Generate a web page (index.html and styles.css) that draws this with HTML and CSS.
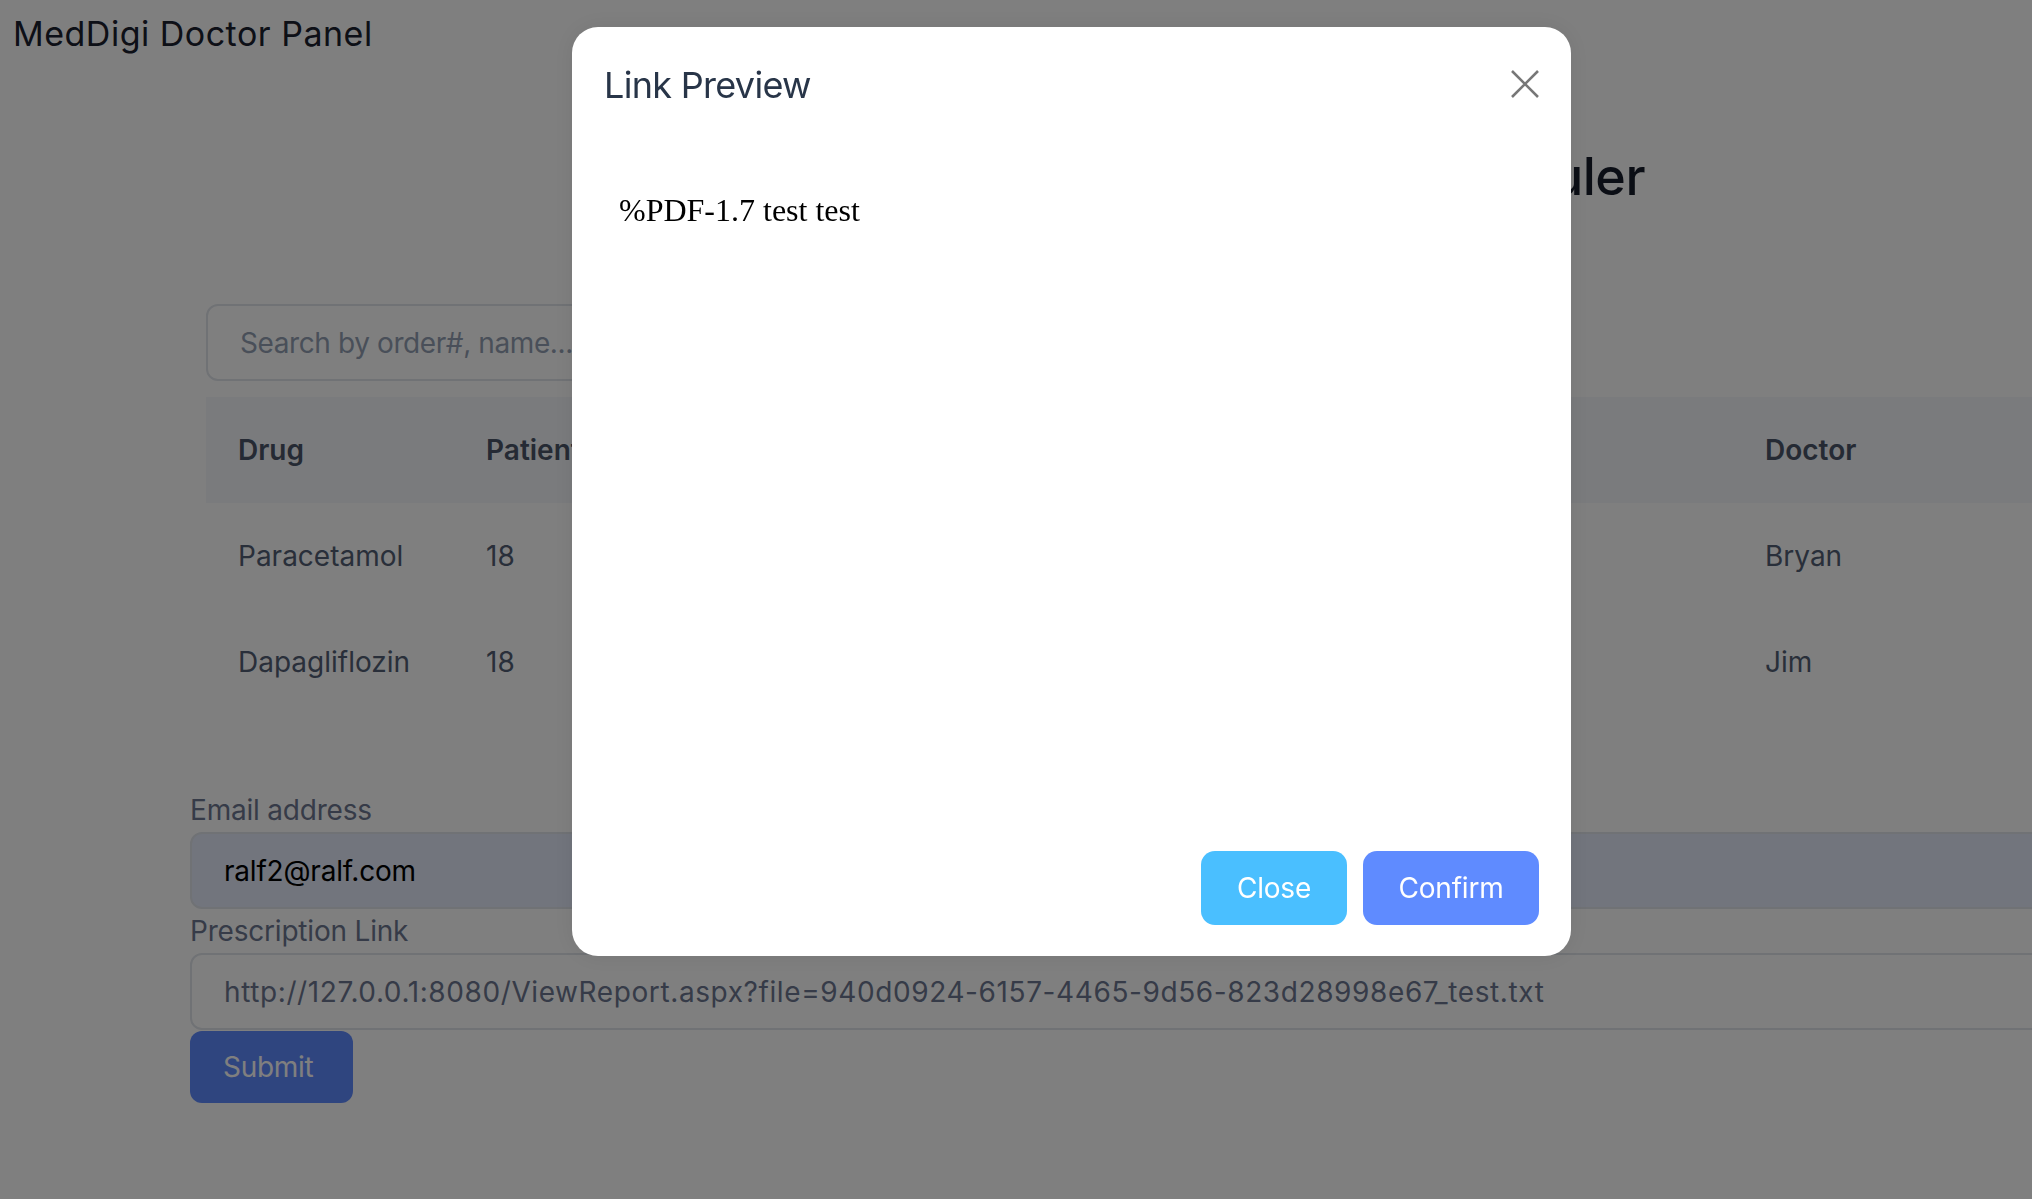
FILE: index.html
```html
<!DOCTYPE html>
<html lang="en">
<head>
<meta charset="utf-8">
<title>MedDigi Doctor Panel</title>
<link rel="stylesheet" href="styles.css">
</head>
<body>
<header class="topbar">MedDigi Doctor Panel</header>
<main class="content">
  <h1 class="page-title">Prescription Scheduler</h1>
  <div class="search">
    <input class="search-input" type="text" placeholder="Search by order#, name...">
  </div>
  <table class="orders">
    <colgroup>
      <col class="c-drug"><col class="c-mid"><col class="c-mid"><col class="c-mid"><col class="c-last"><col class="c-doc">
    </colgroup>
    <thead>
      <tr><th>Drug</th><th>Patient</th><th>Date</th><th>Status</th><th>Link</th><th>Doctor</th></tr>
    </thead>
    <tbody>
      <tr><td>Paracetamol</td><td>18</td><td>2023-10-01</td><td>Sent</td><td>View</td><td>Bryan</td></tr>
      <tr><td>Dapagliflozin</td><td>18</td><td>2023-10-02</td><td>Sent</td><td>View</td><td>Jim</td></tr>
    </tbody>
  </table>
  <form class="rx-form">
    <label class="field-label" for="email">Email address</label>
    <input class="field-input filled" id="email" type="text" value="ralf2@ralf.com">
    <label class="field-label" for="link">Prescription Link</label>
    <input class="field-input link" id="link" type="text" value="http://127.0.0.1:8080/ViewReport.aspx?file=940d0924-6157-4465-9d56-823d28998e67_test.txt">
    <button class="btn-submit" type="button">Submit</button>
  </form>
</main>

<div class="overlay">
  <div class="modal">
    <div class="modal-header">
      <h2 class="modal-title">Link Preview</h2>
      <button class="modal-x" type="button" aria-label="Close">
        <svg width="28" height="28" viewBox="0 0 28 28"><path d="M1 1 L27 27 M27 1 L1 27" stroke="#777" stroke-width="2.6" fill="none"/></svg>
      </button>
    </div>
    <div class="modal-body">
      <div class="preview">%PDF-1.7 test test</div>
    </div>
    <div class="modal-footer">
      <button class="btn btn-close" type="button">Close</button>
      <button class="btn btn-confirm" type="button">Confirm</button>
    </div>
  </div>
</div>
</body>
</html>
```

FILE: styles.css
```css
html, body {
  margin: 0;
  padding: 0;
  overflow: hidden;
  background: #ffffff;
}
body {
  font-family: "Inter", "Liberation Sans", sans-serif;
  color: #1f2533;
  width: 2032px;
  height: 1199px;
}

.topbar {
  padding: 14px 13px 0;
  font-size: 34px;
  line-height: 40px;
  font-weight: 400;
  letter-spacing: 0.5px;
  color: #1a202e;
}

.content {
  padding-left: 190px;
}

.page-title {
  margin: 91px 0 0;
  font-size: 52px;
  line-height: 64px;
  font-weight: 500;
  color: #161c2a;
  text-align: right;
  padding-right: 387px;
  letter-spacing: -0.5px;
}

.search {
  margin: 95px 0 0 16px;
}
.search-input {
  box-sizing: border-box;
  width: 560px;
  height: 77px;
  border: 2px solid #e0e4ea;
  border-radius: 12px;
  padding: 0 32px;
  font-family: "Inter", "Liberation Sans", sans-serif;
  font-size: 28px;
  letter-spacing: -0.4px;
  outline: none;
  background: #fff;
}
.search-input::placeholder {
  color: #939fb3;
}

.orders {
  margin: 16px 0 0 16px;
  border-collapse: collapse;
  table-layout: fixed;
  width: 1827px;
  font-size: 28px;
  line-height: 34px;
  letter-spacing: 0;
}
.c-drug { width: 248px; }
.c-mid { width: 320px; }
.c-last { width: 319px; }
.c-doc { width: 300px; }
.orders th, .orders td {
  text-align: left;
  padding: 0 0 0 32px;
  white-space: nowrap;
  overflow: hidden;
}
.orders thead tr {
  background: #f5f7fa;
}
.orders th {
  height: 106px;
  font-weight: 600;
  color: #4a5568;
}
.orders td {
  height: 106px;
  font-weight: 400;
  color: #525e74;
}

.rx-form {
  margin-top: 78px;
  width: 1900px;
  display: flex;
  flex-direction: column;
  align-items: flex-start;
}
.field-label {
  font-size: 28px;
  line-height: 34px;
  letter-spacing: -0.2px;
  color: #6d7790;
  margin-bottom: 5px;
}
.field-input {
  box-sizing: border-box;
  width: 100%;
  height: 77px;
  border: 2px solid #e0e4ea;
  border-radius: 12px;
  padding: 0 32px;
  font-family: "Inter", "Liberation Sans", sans-serif;
  font-size: 28px;
  letter-spacing: -0.2px;
  background: #fff;
  color: #6d7790;
  outline: none;
  margin-bottom: 5px;
}
.field-input.filled {
  background: #e4ebfb;
  color: #000;
}
.field-input.link {
  margin-bottom: 1px;
  letter-spacing: 0.6px;
}
.btn-submit {
  height: 72px;
  width: 163px;
  border: none;
  border-radius: 12px;
  background: #5f8aff;
  color: #ffffff;
  font-family: "Inter", "Liberation Sans", sans-serif;
  font-size: 28px;
  letter-spacing: -0.3px;
  padding: 0 0 0 33px;
  text-align: left;
}

.overlay {
  position: fixed;
  inset: 0;
  background: rgba(0, 0, 0, 0.5);
  display: flex;
  align-items: flex-start;
  padding: 27px 0 0 572px;
}
.modal {
  width: 999px;
  height: 929px;
  background: #ffffff;
  border-radius: 26px;
  box-shadow: 0 0 24px rgba(0, 0, 0, 0.08);
  display: flex;
  flex-direction: column;
}
.modal-header {
  display: flex;
  justify-content: space-between;
  align-items: flex-start;
  padding: 36px 32px 0;
}
.modal-title {
  margin: 0;
  font-size: 36px;
  line-height: 44px;
  font-weight: 400;
  letter-spacing: -0.7px;
  color: #283548;
}
.modal-x {
  margin-top: 7px;
  width: 28px;
  height: 28px;
  padding: 0;
  border: none;
  background: none;
  display: flex;
}
.modal-body {
  flex: 1;
  padding: 69px 32px 0;
}
.preview {
  padding: 16px 16px 16px 15px;
  font-family: "Liberation Serif", "Times New Roman", serif;
  font-size: 32px;
  color: #000;
}
.modal-footer {
  display: flex;
  justify-content: flex-end;
  gap: 16px;
  padding: 0 32px 31px;
}
.btn {
  height: 74px;
  padding: 0 34px;
  border: none;
  border-radius: 14px;
  color: #ffffff;
  font-family: "Inter", "Liberation Sans", sans-serif;
  font-size: 28px;
  letter-spacing: -0.2px;
}
.btn-close {
  background: #4abfff;
  width: 146px;
}
.btn-confirm {
  background: #5f8bff;
  width: 176px;
}
```
